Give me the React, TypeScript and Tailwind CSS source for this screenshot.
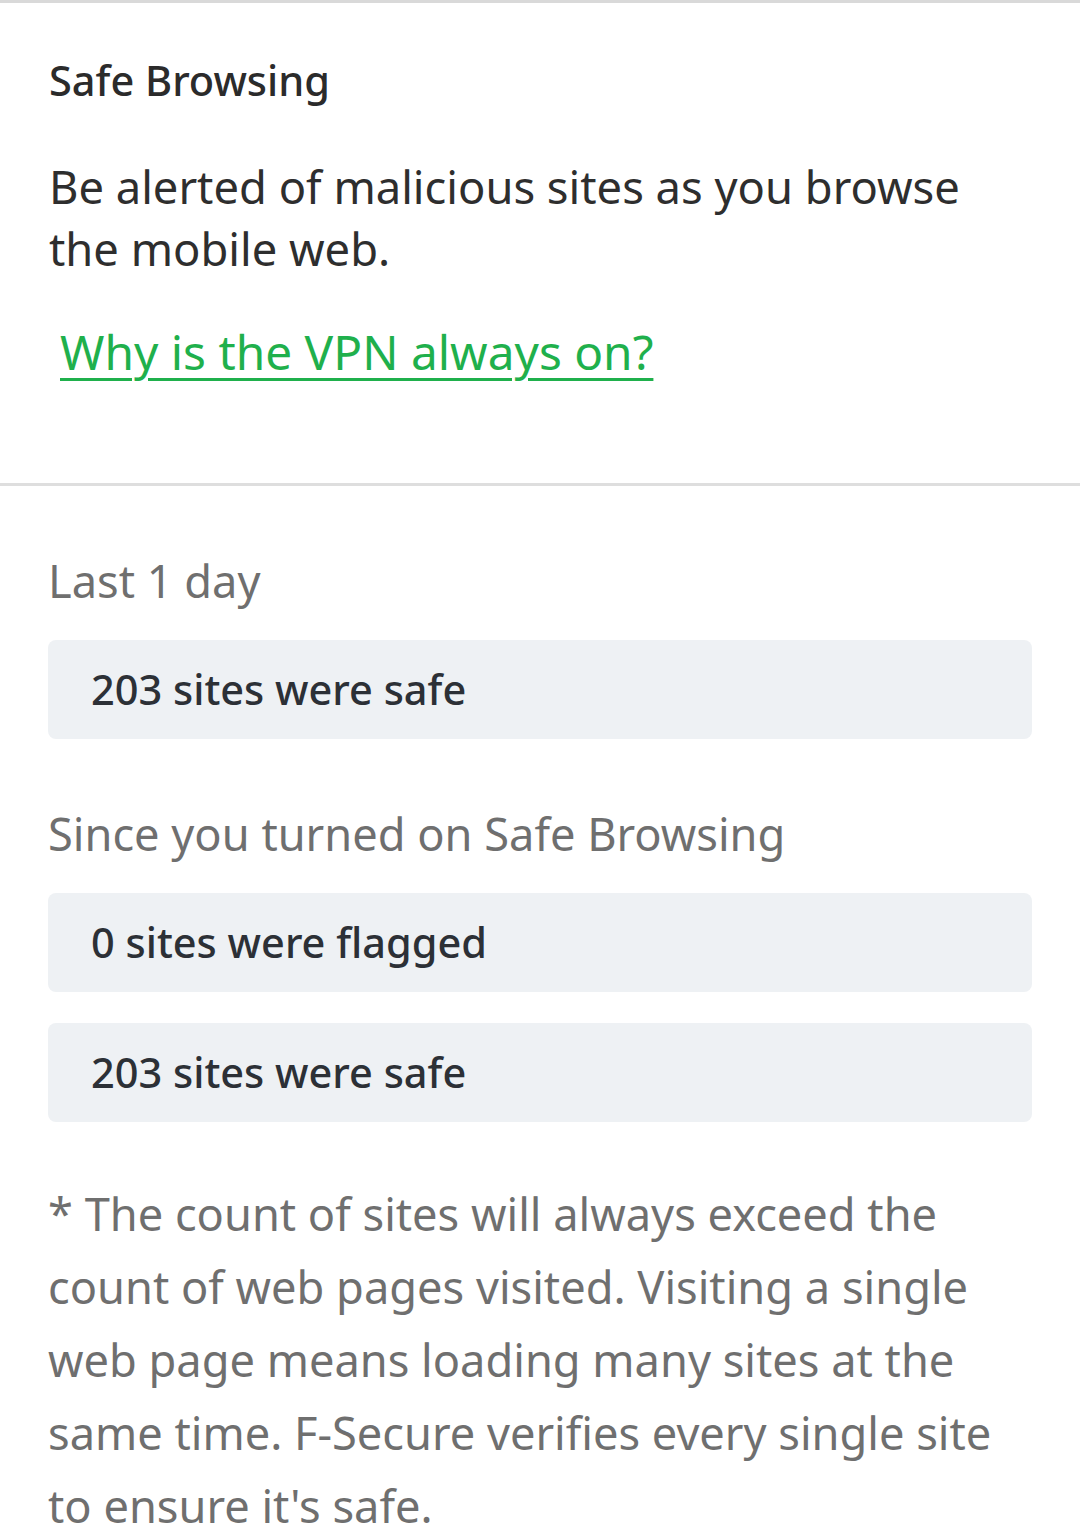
const stats = [
  { label: "Last 1 day", rows: ["203 sites were safe"] },
  {
    label: "Since you turned on Safe Browsing",
    rows: ["0 sites were flagged", "203 sites were safe"],
  },
];

const StatRow = ({ text }: { text: string }) => (
  <div className="h-[99px] rounded-lg bg-[#eef1f4] pl-[43px] text-[41.5px] leading-[99px] font-medium text-[#2c3036]">
    {text}
  </div>
);

const App = (): JSX.Element => {
  return (
    <div className="w-[1080px] h-[1538px] overflow-hidden bg-white font-['Noto_Sans',sans-serif] font-stretch-semi-condensed">
      <div className="border-t-[3px] border-[#d9d9d9] px-[49px] pt-[49px] pb-[100px]">
        <h1 className="text-[41.5px] leading-[56px] font-medium text-[#2b2b2b]">
          Safe Browsing
        </h1>
        <p className="mt-[48px] text-[45.3px] leading-[62px] text-[#2e2e2e]">
          Be alerted of malicious sites as you browse the mobile web.
        </p>
        <a
          href="#"
          className="mt-[41px] ml-[11px] inline-block text-[47.8px] leading-[62px] text-[#1fb04c] underline underline-offset-[8px] decoration-[3px]"
        >
          Why is the VPN always on?
        </a>
      </div>
      <div className="border-t-[3px] border-[#dedede] px-[48px] pt-[67px]">
        {stats.map((group, i) => (
          <div key={i} className={i > 0 ? "mt-[67px]" : ""}>
            <div className="text-[45.2px] leading-[56px] text-[#6f6f6f]">
              {group.label}
            </div>
            <div className="mt-[31px] flex flex-col gap-[31px]">
              {group.rows.map((row, j) => (
                <StatRow key={j} text={row} />
              ))}
            </div>
          </div>
        ))}
        <p className="mt-[55px] pr-[40px] text-[45.2px] leading-[73px] text-[#6f6f6f]">
          * The count of sites will always exceed the count of web pages
          visited. Visiting a single web page means loading many sites at the
          same time. F-Secure verifies every single site to ensure it's safe.
        </p>
      </div>
    </div>
  );
};

export default App;
